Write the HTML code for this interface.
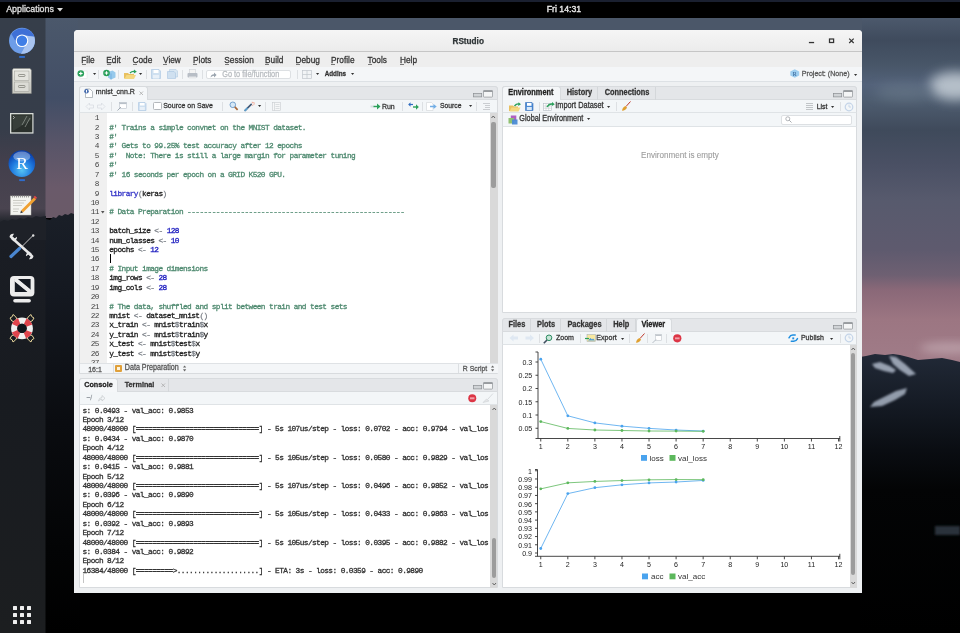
<!DOCTYPE html><html><head><meta charset="utf-8"><style>
*{margin:0;padding:0;box-sizing:border-box}
html,body{width:960px;height:633px;overflow:hidden;background:#000;font-family:"Liberation Sans",sans-serif}
.t{position:absolute;white-space:pre}
.m{-webkit-text-stroke:0.3px currentColor}
.s{-webkit-text-stroke:0.25px currentColor}
svg{position:absolute;overflow:visible}
#root{position:absolute;left:0;top:0;width:960px;height:633px;overflow:hidden;filter:blur(0.3px)}</style></head><body><div id="root">
<svg style="left:0;top:0" width="960" height="633" viewBox="0 0 960 633">
<defs>
<filter id="bl4" x="-50%" y="-50%" width="200%" height="200%"><feGaussianBlur stdDeviation="4"/></filter>
<filter id="bl1" x="-50%" y="-50%" width="200%" height="200%"><feGaussianBlur stdDeviation="1"/></filter>
<linearGradient id="skyL" x1="0" y1="0" x2="0" y2="1">
<stop offset="0" stop-color="#4b586b"/><stop offset="0.4" stop-color="#424e66"/>
<stop offset="0.6" stop-color="#565468"/><stop offset="0.85" stop-color="#6a5a6a"/><stop offset="1" stop-color="#6a5a68"/></linearGradient>
<linearGradient id="skyR" x1="0" y1="18" x2="0" y2="363" gradientUnits="userSpaceOnUse">
<stop offset="0" stop-color="#4c596c"/><stop offset="0.064" stop-color="#3f4b5d"/><stop offset="0.136" stop-color="#485668"/><stop offset="0.194" stop-color="#53627a"/>
<stop offset="0.238" stop-color="#4e5d70"/><stop offset="0.325" stop-color="#3f4a5b"/><stop offset="0.426" stop-color="#4a5064"/><stop offset="0.528" stop-color="#575a6d"/>
<stop offset="0.672" stop-color="#5e5a6e"/><stop offset="0.745" stop-color="#6e6072"/><stop offset="0.788" stop-color="#8a6878"/><stop offset="0.875" stop-color="#9c7682"/><stop offset="1" stop-color="#a07c88"/></linearGradient>
<linearGradient id="mtnR" x1="0" y1="352" x2="0" y2="633" gradientUnits="userSpaceOnUse">
<stop offset="0" stop-color="#222a38"/><stop offset="0.17" stop-color="#161c26"/><stop offset="0.35" stop-color="#0a0d12"/><stop offset="0.49" stop-color="#030405"/><stop offset="1" stop-color="#000"/></linearGradient>
<linearGradient id="mtnL" x1="0" y1="212" x2="0" y2="633" gradientUnits="userSpaceOnUse">
<stop offset="0" stop-color="#1a1f28"/><stop offset="0.2" stop-color="#141820"/><stop offset="0.5" stop-color="#0a0c10"/><stop offset="0.8" stop-color="#030405"/><stop offset="1" stop-color="#000"/></linearGradient>
</defs>
<rect x="0" y="0" width="960" height="633" fill="#000"/>
<rect x="40" y="18" width="40" height="200" fill="url(#skyL)"/>
<rect x="860" y="18" width="100" height="345" fill="url(#skyR)"/>
<rect x="78" y="18" width="784" height="13" fill="#4b5769"/>
<filter id="bl6" x="-50%" y="-50%" width="200%" height="200%"><feGaussianBlur stdDeviation="6"/></filter>
<ellipse cx="955" cy="86" rx="26" ry="14" fill="#c0c9d2" filter="url(#bl6)" opacity="0.9"/>
<ellipse cx="905" cy="92" rx="30" ry="8" fill="#6a7a8a" filter="url(#bl6)" opacity="0.6"/>
<ellipse cx="950" cy="348" rx="30" ry="6" fill="#c8b0b8" filter="url(#bl4)" opacity="0.6"/>
<polygon points="40,222 46,219 50,220 53,217 56,218 59,215 62,216 65,214 68,215 71,213 74,214 80,213 80,633 40,633" fill="url(#mtnL)"/>
<polygon points="860,357 866,356 875,354 885,355 893,354 900,355 908,357 918,360 930,359 942,358 952,360 960,362 960,633 860,633" fill="url(#mtnR)"/>
<g filter="url(#bl1)" opacity="0.9">
<polygon points="872,364 880,362 890,366 896,370 893,373 884,371 875,368" fill="#a4aebe"/>
<polygon points="889,356 896,357 905,364 916,374 909,376 900,370 893,364" fill="#a4aebe"/>
<polygon points="870,407 874,402 884,397 896,391 907,388 905,394 895,400 882,406" fill="#a0aaba"/>
</g>
<rect x="935" y="526" width="25" height="9" fill="#2a303a" filter="url(#bl1)"/>
</svg>
<div class="t s" style="left:0px;top:0px;width:960px;height:18px;background:#000;border-top:2px solid #1a2030"></div>
<div class="t s" style="left:6.2px;top:3.84px;font-size:8.85px;line-height:11.51px;color:#dcdcdc;font-weight:normal;font-family:'Liberation Sans',sans-serif;-webkit-text-stroke:0.35px #dcdcdc">Applications</div>
<svg style="left:57px;top:8px" width="7" height="4"><polygon points="0,0 6,0 3,3.5" fill="#ddd"/></svg>
<div class="t s" style="left:546.8px;top:3.94px;font-size:8.7px;line-height:11.31px;color:#ececec;font-weight:normal;font-family:'Liberation Sans',sans-serif;-webkit-text-stroke:0.35px #ececec">Fri 14:31</div>
<svg style="left:0;top:18px" width="46" height="615" viewBox="0 18 46 615">
<defs><linearGradient id="dockg" x1="0" y1="0" x2="0" y2="1">
<stop offset="0" stop-color="#363e4a"/><stop offset="0.18" stop-color="#363d4a"/><stop offset="0.23" stop-color="#423f4c"/>
<stop offset="0.31" stop-color="#4a4450"/><stop offset="0.33" stop-color="#24272e"/><stop offset="0.36" stop-color="#1a1d24"/><stop offset="0.62" stop-color="#181b20"/><stop offset="1" stop-color="#1c1e20"/></linearGradient>
<radialGradient id="rball" cx="0.4" cy="0.3" r="0.8"><stop offset="0" stop-color="#8fc4f4"/><stop offset="0.5" stop-color="#2f7fd8"/><stop offset="1" stop-color="#1552a8"/></radialGradient>
</defs>
<rect x="0" y="18" width="45.5" height="615" fill="url(#dockg)"/>
<polygon points="0,222 4,220 8,221 12,219 16,220 20,218 24,219 28,217 32,218 36,216 40,217 46,216 46,240 0,240" fill="#1e2128"/>
<!-- chromium -->
<circle cx="22" cy="40.8" r="13" fill="#6d9de8"/>
<path d="M16,42 L11.5,34 A13,13 0 0 1 34.3,36.8 L25,35.5 Z" fill="#3f70d6"/>
<path d="M25,35.5 L34.3,36.8 A13,13 0 0 1 21,53.8 L25.5,45.5 Z" fill="#a9c4f0"/>
<circle cx="22" cy="40.8" r="6.3" fill="#fff"/>
<circle cx="22" cy="40.8" r="5.2" fill="#3f7ee6"/>
<rect x="19.2" y="56" width="5.7" height="1.9" fill="#2f6ccc"/>
<!-- file cabinet -->
<defs><linearGradient id="cab" x1="0" y1="0" x2="0" y2="1"><stop offset="0" stop-color="#f0f0ea"/><stop offset="1" stop-color="#c8c8c0"/></linearGradient></defs>
<path d="M13.5,68.5 H30 L31.3,70 V93.5 H12.3 V70 Z" fill="url(#cab)" stroke="#8a8a84" stroke-width="0.6"/>
<rect x="14.5" y="71" width="14.5" height="9.5" fill="#e4e4de" stroke="#9a9a94" stroke-width="0.5"/>
<rect x="14.5" y="82" width="14.5" height="9.5" fill="#dcdcd6" stroke="#9a9a94" stroke-width="0.5"/>
<rect x="18.5" y="74.5" width="6.5" height="2" rx="0.8" fill="none" stroke="#77776f" stroke-width="0.7"/>
<rect x="18.5" y="85.5" width="6.5" height="2" rx="0.8" fill="none" stroke="#77776f" stroke-width="0.7"/>
<!-- terminal -->
<rect x="10" y="113" width="23.5" height="20.6" fill="#d8dcd8"/>
<rect x="11.3" y="114.3" width="21" height="18" fill="#2a302c"/>
<path d="M12.5,115.5 H31 V120 L13,131 Z" fill="#3e4640" opacity="0.7"/>
<path d="M13,116 L14.5,117.5 L13,119" stroke="#eee" stroke-width="0.6" fill="none"/>
<path d="M22,125 L27,116 M25,127 L30,118" stroke="#8a928c" stroke-width="0.8"/>
<!-- R -->
<defs><radialGradient id="rg" cx="0.5" cy="0.75" r="0.7"><stop offset="0" stop-color="#56c4f4"/><stop offset="0.55" stop-color="#1f7ae0"/><stop offset="1" stop-color="#0a3ea8"/></radialGradient></defs>
<circle cx="21.8" cy="163.6" r="13.3" fill="url(#rg)"/>
<ellipse cx="21.8" cy="156.5" rx="8.5" ry="5" fill="#fff" opacity="0.35"/>
<text x="22" y="169.2" text-anchor="middle" font-family="Liberation Serif" font-size="17.5" fill="#fff">R</text>
<rect x="19.2" y="179.2" width="5.7" height="1.9" fill="#2f6ccc"/>
<!-- text editor -->
<rect x="10.5" y="196" width="20.5" height="19" fill="#f4f4f0" stroke="#b8b8b0" stroke-width="0.5"/>
<path d="M12.5,195.5 V197.5 M14.5,195.5 V197.5 M16.5,195.5 V197.5 M18.5,195.5 V197.5 M20.5,195.5 V197.5 M22.5,195.5 V197.5 M24.5,195.5 V197.5 M26.5,195.5 V197.5 M28.5,195.5 V197.5" stroke="#888" stroke-width="0.8"/>
<path d="M13,200.5 H26 M13,203 H24 M13,205.5 H22 M13,209 H19 M13,211.5 H18" stroke="#b0b0a8" stroke-width="0.6"/>
<path d="M21,210.5 L34,197.5 L36,199.5 L23,212.5 Z" fill="#f0a030"/>
<path d="M33.5,197 L35,195.8 L37,197.8 L35.8,199.3 Z" fill="#e04848"/>
<path d="M21,210.5 L23,212.5 L20.3,213.2 Z" fill="#333"/>
<!-- tools -->
<path d="M12,238 L31,255" stroke="#e8e8e8" stroke-width="2.6"/>
<path d="M9.5,237 A4,4 0 0 1 14,233.8 L12.5,236.5 L14.5,238.5 L17,236.8 A4,4 0 0 1 13.5,241.3 Z" fill="#e8e8e8"/>
<path d="M33.5,256 A4,4 0 0 1 29,259.2 L30.5,256.5 L28.5,254.5 L26,256.2 A4,4 0 0 1 29.5,251.7 Z" fill="#e8e8e8"/>
<path d="M20.5,248 L33,235.5" stroke="#d8d8d8" stroke-width="0.9"/>
<circle cx="33.2" cy="235.5" r="1.2" fill="#e0e0e0"/>
<path d="M11,256.5 L19.5,248.5" stroke="#4a86d0" stroke-width="3.2" stroke-linecap="round"/>
<!-- display -->
<rect x="10" y="276" width="24.4" height="20.5" rx="4" fill="#ececec"/>
<rect x="14.8" y="279" width="15.8" height="13" fill="#151a22"/>
<path d="M14.8,279 L17.8,279 L30.6,289.5 L30.6,292 L27.6,292 L14.8,281.5 Z" fill="#ececec"/>
<path d="M14.8,279 L30.6,292" stroke="#ececec" stroke-width="3.2"/>
<rect x="13.2" y="299" width="17.7" height="3.5" rx="1.75" fill="#ececec"/>
<!-- lifebuoy -->
<path d="M15.5,322 Q11,322 10,318 Q13,317 13,314.5 Q16,316 17.5,320 M28.5,322 Q33,322 34,318 Q31,317 31,314.5 Q28,316 26.5,320 M15.5,334.5 Q11,334.5 10,338.5 Q13,339.5 13,342 Q16,340.5 17.5,336.5 M28.5,334.5 Q33,334.5 34,338.5 Q31,339.5 31,342 Q28,340.5 26.5,336.5" stroke="#e6d49a" stroke-width="1" fill="none"/>
<circle cx="22" cy="328.4" r="7.8" fill="none" stroke="#f0f0f0" stroke-width="6.2"/>
<circle cx="22" cy="328.4" r="7.8" fill="none" stroke="#e0444c" stroke-width="6.2" stroke-dasharray="6.125 6.125" stroke-dashoffset="-3.06"/>
<circle cx="22" cy="328.4" r="4.7" fill="#12161c"/>
<!-- app grid -->
<g fill="#eee"><rect x="13" y="606" width="4" height="4" rx="0.5"/><rect x="20" y="606" width="4" height="4" rx="0.5"/><rect x="27" y="606" width="4" height="4" rx="0.5"/>
<rect x="13" y="613" width="4" height="4" rx="0.5"/><rect x="20" y="613" width="4" height="4" rx="0.5"/><rect x="27" y="613" width="4" height="4" rx="0.5"/>
<rect x="13" y="620" width="4" height="4" rx="0.5"/><rect x="20" y="620" width="4" height="4" rx="0.5"/><rect x="27" y="620" width="4" height="4" rx="0.5"/></g>
</svg>
<div class="t s" style="left:74px;top:30px;width:788px;height:563px;background:#eef0f2;border-radius:4px 4px 0 0"></div>
<div class="t s" style="left:74px;top:30px;width:788px;height:22px;background:linear-gradient(#f5f5f5,#ececec);border-bottom:1px solid #c6c6c6;border-radius:4px 4px 0 0"></div>
<div class="t s" style="left:452.5px;top:36.57px;font-size:8.2px;line-height:10.66px;color:#2e3436;font-weight:bold;font-family:'Liberation Sans',sans-serif;">RStudio</div>
<svg style="left:800px;top:34px" width="60" height="14">
<rect x="8.9" y="7.9" width="5.2" height="1.3" fill="#333"/>
<rect x="29.5" y="5" width="4.1" height="3.5" fill="none" stroke="#333" stroke-width="1.25"/>
<path d="M49.2,4.6 L53.7,9 M53.7,4.6 L49.2,9" stroke="#333" stroke-width="1.2"/>
</svg>
<div class="t s" style="left:74px;top:52px;width:788px;height:15px;background:#eeeeee"></div>
<div class="t s" style="left:81.3px;top:54.81px;font-size:8.3px;line-height:10.79px;color:#333;font-weight:normal;font-family:'Liberation Sans',sans-serif;transform:scaleY(1.170);">File</div>
<div class="t s" style="left:81.5px;top:64.0px;width:4.2px;height:0.55px;background:#777"></div>
<div class="t s" style="left:106.3px;top:54.81px;font-size:8.3px;line-height:10.79px;color:#333;font-weight:normal;font-family:'Liberation Sans',sans-serif;transform:scaleY(1.170);">Edit</div>
<div class="t s" style="left:106.5px;top:64.0px;width:4.2px;height:0.55px;background:#777"></div>
<div class="t s" style="left:132.5px;top:54.81px;font-size:8.3px;line-height:10.79px;color:#333;font-weight:normal;font-family:'Liberation Sans',sans-serif;transform:scaleY(1.170);">Code</div>
<div class="t s" style="left:132.7px;top:64.0px;width:4.2px;height:0.55px;background:#777"></div>
<div class="t s" style="left:163px;top:54.81px;font-size:8.3px;line-height:10.79px;color:#333;font-weight:normal;font-family:'Liberation Sans',sans-serif;transform:scaleY(1.170);">View</div>
<div class="t s" style="left:163.2px;top:64.0px;width:4.2px;height:0.55px;background:#777"></div>
<div class="t s" style="left:193px;top:54.81px;font-size:8.3px;line-height:10.79px;color:#333;font-weight:normal;font-family:'Liberation Sans',sans-serif;transform:scaleY(1.170);">Plots</div>
<div class="t s" style="left:193.2px;top:64.0px;width:4.2px;height:0.55px;background:#777"></div>
<div class="t s" style="left:224.3px;top:54.81px;font-size:8.3px;line-height:10.79px;color:#333;font-weight:normal;font-family:'Liberation Sans',sans-serif;transform:scaleY(1.170);">Session</div>
<div class="t s" style="left:224.5px;top:64.0px;width:4.2px;height:0.55px;background:#777"></div>
<div class="t s" style="left:265px;top:54.81px;font-size:8.3px;line-height:10.79px;color:#333;font-weight:normal;font-family:'Liberation Sans',sans-serif;transform:scaleY(1.170);">Build</div>
<div class="t s" style="left:265.2px;top:64.0px;width:4.2px;height:0.55px;background:#777"></div>
<div class="t s" style="left:295.5px;top:54.81px;font-size:8.3px;line-height:10.79px;color:#333;font-weight:normal;font-family:'Liberation Sans',sans-serif;transform:scaleY(1.170);">Debug</div>
<div class="t s" style="left:295.7px;top:64.0px;width:4.2px;height:0.55px;background:#777"></div>
<div class="t s" style="left:331px;top:54.81px;font-size:8.3px;line-height:10.79px;color:#333;font-weight:normal;font-family:'Liberation Sans',sans-serif;transform:scaleY(1.170);">Profile</div>
<div class="t s" style="left:331.2px;top:64.0px;width:4.2px;height:0.55px;background:#777"></div>
<div class="t s" style="left:367.5px;top:54.81px;font-size:8.3px;line-height:10.79px;color:#333;font-weight:normal;font-family:'Liberation Sans',sans-serif;transform:scaleY(1.170);">Tools</div>
<div class="t s" style="left:367.7px;top:64.0px;width:4.2px;height:0.55px;background:#777"></div>
<div class="t s" style="left:400px;top:54.81px;font-size:8.3px;line-height:10.79px;color:#333;font-weight:normal;font-family:'Liberation Sans',sans-serif;transform:scaleY(1.170);">Help</div>
<div class="t s" style="left:400.2px;top:64.0px;width:4.2px;height:0.55px;background:#777"></div>
<div class="t s" style="left:74px;top:67px;width:788px;height:14.5px;background:#f4f6f8;border-bottom:1px solid #dde1e5"></div>
<div class="t s" style="left:78.6px;top:85.5px;width:419.3px;height:288px;background:#fff;border:1px solid #d8dbde;border-radius:3px 3px 0 0"></div>
<div class="t s" style="left:78.6px;top:85.5px;width:419.3px;height:14px;background:#e4e6e9;border:1px solid #d8dbde;border-radius:3px 3px 0 0"></div>
<div class="t s" style="left:78.6px;top:99.5px;width:419.3px;height:13px;background:#f3f6f8;border-left:1px solid #d8dbde;border-right:1px solid #d8dbde;border-bottom:1px solid #dfe3e6"></div>
<div class="t s" style="left:78.6px;top:377.5px;width:419.3px;height:210.5px;background:#fff;border:1px solid #d8dbde;border-radius:3px 3px 0 0"></div>
<div class="t s" style="left:78.6px;top:377.5px;width:419.3px;height:14px;background:#e4e6e9;border:1px solid #d8dbde;border-radius:3px 3px 0 0"></div>
<div class="t s" style="left:78.6px;top:391.5px;width:419.3px;height:13px;background:#f3f6f8;border-left:1px solid #d8dbde;border-right:1px solid #d8dbde;border-bottom:1px solid #dfe3e6"></div>
<div class="t s" style="left:502.2px;top:85.5px;width:354.8px;height:227.5px;background:#fff;border:1px solid #d8dbde;border-radius:3px 3px 0 0"></div>
<div class="t s" style="left:502.2px;top:85.5px;width:354.8px;height:14px;background:#e4e6e9;border:1px solid #d8dbde;border-radius:3px 3px 0 0"></div>
<div class="t s" style="left:502.2px;top:99.5px;width:354.8px;height:13px;background:#f3f6f8;border-left:1px solid #d8dbde;border-right:1px solid #d8dbde;border-bottom:1px solid #dfe3e6"></div>
<div class="t s" style="left:502.2px;top:112.5px;width:354.8px;height:14px;background:#f3f6f8;border-left:1px solid #d8dbde;border-right:1px solid #d8dbde;border-bottom:1px solid #dfe3e6"></div>
<div class="t s" style="left:502.2px;top:317.5px;width:354.8px;height:270.5px;background:#fff;border:1px solid #d8dbde;border-radius:3px 3px 0 0"></div>
<div class="t s" style="left:502.2px;top:317.5px;width:354.8px;height:14px;background:#e4e6e9;border:1px solid #d8dbde;border-radius:3px 3px 0 0"></div>
<div class="t s" style="left:502.2px;top:331.5px;width:354.8px;height:13px;background:#f3f6f8;border-left:1px solid #d8dbde;border-right:1px solid #d8dbde;border-bottom:1px solid #dfe3e6"></div>
<div class="t s" style="left:79.5px;top:112.5px;width:27px;height:251px;background:#f0f0f0"></div>
<div class="t" style="left:79.5px;top:112.5px;width:410px;height:250.5px;overflow:hidden">
<div class="t" style="left:0;top:1.69px;width:19.4px;text-align:right;font:7.8px/9.417px 'Liberation Mono',monospace;letter-spacing:-0.581px;color:#444">1</div>
<div class="t" style="left:0;top:11.11px;width:19.4px;text-align:right;font:7.8px/9.417px 'Liberation Mono',monospace;letter-spacing:-0.581px;color:#444">2</div>
<div class="t m" style="left:29.75px;top:11.11px;font:7.8px/9.417px 'Liberation Mono',monospace;letter-spacing:-0.581px;color:#222"><span style="color:#4f8a70">#&#x27; Trains a simple convnet on the MNIST dataset.</span></div>
<div class="t" style="left:0;top:20.53px;width:19.4px;text-align:right;font:7.8px/9.417px 'Liberation Mono',monospace;letter-spacing:-0.581px;color:#444">3</div>
<div class="t m" style="left:29.75px;top:20.53px;font:7.8px/9.417px 'Liberation Mono',monospace;letter-spacing:-0.581px;color:#222"><span style="color:#4f8a70">#&#x27;</span></div>
<div class="t" style="left:0;top:29.94px;width:19.4px;text-align:right;font:7.8px/9.417px 'Liberation Mono',monospace;letter-spacing:-0.581px;color:#444">4</div>
<div class="t m" style="left:29.75px;top:29.94px;font:7.8px/9.417px 'Liberation Mono',monospace;letter-spacing:-0.581px;color:#222"><span style="color:#4f8a70">#&#x27; Gets to 99.25% test accuracy after 12 epochs</span></div>
<div class="t" style="left:0;top:39.36px;width:19.4px;text-align:right;font:7.8px/9.417px 'Liberation Mono',monospace;letter-spacing:-0.581px;color:#444">5</div>
<div class="t m" style="left:29.75px;top:39.36px;font:7.8px/9.417px 'Liberation Mono',monospace;letter-spacing:-0.581px;color:#222"><span style="color:#4f8a70">#&#x27;  Note: There is still a large margin for parameter tuning</span></div>
<div class="t" style="left:0;top:48.78px;width:19.4px;text-align:right;font:7.8px/9.417px 'Liberation Mono',monospace;letter-spacing:-0.581px;color:#444">6</div>
<div class="t m" style="left:29.75px;top:48.78px;font:7.8px/9.417px 'Liberation Mono',monospace;letter-spacing:-0.581px;color:#222"><span style="color:#4f8a70">#&#x27;</span></div>
<div class="t" style="left:0;top:58.19px;width:19.4px;text-align:right;font:7.8px/9.417px 'Liberation Mono',monospace;letter-spacing:-0.581px;color:#444">7</div>
<div class="t m" style="left:29.75px;top:58.19px;font:7.8px/9.417px 'Liberation Mono',monospace;letter-spacing:-0.581px;color:#222"><span style="color:#4f8a70">#&#x27; 16 seconds per epoch on a GRID K520 GPU.</span></div>
<div class="t" style="left:0;top:67.61px;width:19.4px;text-align:right;font:7.8px/9.417px 'Liberation Mono',monospace;letter-spacing:-0.581px;color:#444">8</div>
<div class="t" style="left:0;top:77.03px;width:19.4px;text-align:right;font:7.8px/9.417px 'Liberation Mono',monospace;letter-spacing:-0.581px;color:#444">9</div>
<div class="t m" style="left:29.75px;top:77.03px;font:7.8px/9.417px 'Liberation Mono',monospace;letter-spacing:-0.581px;color:#222"><span style="color:#3434c8">library</span><span style="color:#7a7f86">(</span><span style="color:#222">keras</span><span style="color:#7a7f86">)</span></div>
<div class="t" style="left:0;top:86.44px;width:19.4px;text-align:right;font:7.8px/9.417px 'Liberation Mono',monospace;letter-spacing:-0.581px;color:#444">10</div>
<div class="t" style="left:0;top:95.86px;width:19.4px;text-align:right;font:7.8px/9.417px 'Liberation Mono',monospace;letter-spacing:-0.581px;color:#444">11</div>
<div class="t m" style="left:29.75px;top:95.86px;font:7.8px/9.417px 'Liberation Mono',monospace;letter-spacing:-0.581px;color:#222"><span style="color:#4f8a70"># Data Preparation -----------------------------------------------------</span></div>
<div class="t" style="left:0;top:105.28px;width:19.4px;text-align:right;font:7.8px/9.417px 'Liberation Mono',monospace;letter-spacing:-0.581px;color:#444">12</div>
<div class="t" style="left:0;top:114.70px;width:19.4px;text-align:right;font:7.8px/9.417px 'Liberation Mono',monospace;letter-spacing:-0.581px;color:#444">13</div>
<div class="t m" style="left:29.75px;top:114.70px;font:7.8px/9.417px 'Liberation Mono',monospace;letter-spacing:-0.581px;color:#222"><span style="color:#222">batch_size</span><span style="color:#7a7f86"> &lt;- </span><span style="color:#2020c0">128</span></div>
<div class="t" style="left:0;top:124.11px;width:19.4px;text-align:right;font:7.8px/9.417px 'Liberation Mono',monospace;letter-spacing:-0.581px;color:#444">14</div>
<div class="t m" style="left:29.75px;top:124.11px;font:7.8px/9.417px 'Liberation Mono',monospace;letter-spacing:-0.581px;color:#222"><span style="color:#222">num_classes</span><span style="color:#7a7f86"> &lt;- </span><span style="color:#2020c0">10</span></div>
<div class="t" style="left:0;top:133.53px;width:19.4px;text-align:right;font:7.8px/9.417px 'Liberation Mono',monospace;letter-spacing:-0.581px;color:#444">15</div>
<div class="t m" style="left:29.75px;top:133.53px;font:7.8px/9.417px 'Liberation Mono',monospace;letter-spacing:-0.581px;color:#222"><span style="color:#222">epochs</span><span style="color:#7a7f86"> &lt;- </span><span style="color:#2020c0">12</span></div>
<div class="t" style="left:0;top:142.95px;width:19.4px;text-align:right;font:7.8px/9.417px 'Liberation Mono',monospace;letter-spacing:-0.581px;color:#444">16</div>
<div class="t" style="left:0;top:152.36px;width:19.4px;text-align:right;font:7.8px/9.417px 'Liberation Mono',monospace;letter-spacing:-0.581px;color:#444">17</div>
<div class="t m" style="left:29.75px;top:152.36px;font:7.8px/9.417px 'Liberation Mono',monospace;letter-spacing:-0.581px;color:#222"><span style="color:#4f8a70"># Input image dimensions</span></div>
<div class="t" style="left:0;top:161.78px;width:19.4px;text-align:right;font:7.8px/9.417px 'Liberation Mono',monospace;letter-spacing:-0.581px;color:#444">18</div>
<div class="t m" style="left:29.75px;top:161.78px;font:7.8px/9.417px 'Liberation Mono',monospace;letter-spacing:-0.581px;color:#222"><span style="color:#222">img_rows</span><span style="color:#7a7f86"> &lt;- </span><span style="color:#2020c0">28</span></div>
<div class="t" style="left:0;top:171.20px;width:19.4px;text-align:right;font:7.8px/9.417px 'Liberation Mono',monospace;letter-spacing:-0.581px;color:#444">19</div>
<div class="t m" style="left:29.75px;top:171.20px;font:7.8px/9.417px 'Liberation Mono',monospace;letter-spacing:-0.581px;color:#222"><span style="color:#222">img_cols</span><span style="color:#7a7f86"> &lt;- </span><span style="color:#2020c0">28</span></div>
<div class="t" style="left:0;top:180.61px;width:19.4px;text-align:right;font:7.8px/9.417px 'Liberation Mono',monospace;letter-spacing:-0.581px;color:#444">20</div>
<div class="t" style="left:0;top:190.03px;width:19.4px;text-align:right;font:7.8px/9.417px 'Liberation Mono',monospace;letter-spacing:-0.581px;color:#444">21</div>
<div class="t m" style="left:29.75px;top:190.03px;font:7.8px/9.417px 'Liberation Mono',monospace;letter-spacing:-0.581px;color:#222"><span style="color:#4f8a70"># The data, shuffled and split between train and test sets</span></div>
<div class="t" style="left:0;top:199.45px;width:19.4px;text-align:right;font:7.8px/9.417px 'Liberation Mono',monospace;letter-spacing:-0.581px;color:#444">22</div>
<div class="t m" style="left:29.75px;top:199.45px;font:7.8px/9.417px 'Liberation Mono',monospace;letter-spacing:-0.581px;color:#222"><span style="color:#222">mnist</span><span style="color:#7a7f86"> &lt;- </span><span style="color:#222">dataset_mnist</span><span style="color:#7a7f86">()</span></div>
<div class="t" style="left:0;top:208.87px;width:19.4px;text-align:right;font:7.8px/9.417px 'Liberation Mono',monospace;letter-spacing:-0.581px;color:#444">23</div>
<div class="t m" style="left:29.75px;top:208.87px;font:7.8px/9.417px 'Liberation Mono',monospace;letter-spacing:-0.581px;color:#222"><span style="color:#222">x_train</span><span style="color:#7a7f86"> &lt;- </span><span style="color:#222">mnist</span><span style="color:#7a7f86">$</span><span style="color:#222">train</span><span style="color:#7a7f86">$</span><span style="color:#222">x</span></div>
<div class="t" style="left:0;top:218.28px;width:19.4px;text-align:right;font:7.8px/9.417px 'Liberation Mono',monospace;letter-spacing:-0.581px;color:#444">24</div>
<div class="t m" style="left:29.75px;top:218.28px;font:7.8px/9.417px 'Liberation Mono',monospace;letter-spacing:-0.581px;color:#222"><span style="color:#222">y_train</span><span style="color:#7a7f86"> &lt;- </span><span style="color:#222">mnist</span><span style="color:#7a7f86">$</span><span style="color:#222">train</span><span style="color:#7a7f86">$</span><span style="color:#222">y</span></div>
<div class="t" style="left:0;top:227.70px;width:19.4px;text-align:right;font:7.8px/9.417px 'Liberation Mono',monospace;letter-spacing:-0.581px;color:#444">25</div>
<div class="t m" style="left:29.75px;top:227.70px;font:7.8px/9.417px 'Liberation Mono',monospace;letter-spacing:-0.581px;color:#222"><span style="color:#222">x_test</span><span style="color:#7a7f86"> &lt;- </span><span style="color:#222">mnist</span><span style="color:#7a7f86">$</span><span style="color:#222">test</span><span style="color:#7a7f86">$</span><span style="color:#222">x</span></div>
<div class="t" style="left:0;top:237.12px;width:19.4px;text-align:right;font:7.8px/9.417px 'Liberation Mono',monospace;letter-spacing:-0.581px;color:#444">26</div>
<div class="t m" style="left:29.75px;top:237.12px;font:7.8px/9.417px 'Liberation Mono',monospace;letter-spacing:-0.581px;color:#222"><span style="color:#222">y_test</span><span style="color:#7a7f86"> &lt;- </span><span style="color:#222">mnist</span><span style="color:#7a7f86">$</span><span style="color:#222">test</span><span style="color:#7a7f86">$</span><span style="color:#222">y</span></div>
<div class="t" style="left:0;top:246.53px;width:19.4px;text-align:right;font:7.8px/9.417px 'Liberation Mono',monospace;letter-spacing:-0.581px;color:#444">27</div>
</div>
<svg style="left:101px;top:211px" width="4" height="3"><polygon points="0,0 3.5,0 1.75,2.5" fill="#555"/></svg>
<div class="t s" style="left:109.5px;top:254px;width:0.9px;height:8.5px;background:#000"></div>
<div class="t s" style="left:489.5px;top:112.5px;width:8px;height:251px;background:#d9d9d9"></div>
<div class="t s" style="left:491px;top:122px;width:4.5px;height:66px;background:#9c9c9c;border-radius:2px"></div>
<svg style="left:491px;top:115px" width="5" height="4"><polyline points="0.5,3 2.25,1 4,3" fill="none" stroke="#555" stroke-width="0.9"/></svg>
<div class="t s" style="left:79.5px;top:363px;width:418px;height:10px;background:#f4f6f8;border-top:1px solid #dfe2e5"></div>
<div class="t s" style="left:88.2px;top:364.55px;font-size:7px;line-height:9.1px;color:#555;font-weight:normal;font-family:'Liberation Sans',sans-serif;transform:scaleY(1.150);">16:1</div>
<div class="t s" style="left:112.5px;top:364px;width:1px;height:8.5px;background:#dcdfe2"></div>
<div class="t s" style="left:115px;top:365px;width:6.5px;height:6.5px;background:#e0a03a;border-radius:1px"></div>
<div class="t s" style="left:117px;top:367px;width:2.5px;height:2.5px;background:#fff3d8"></div>
<div class="t s" style="left:124.8px;top:364.46px;font-size:7.15px;line-height:9.29px;color:#555;font-weight:normal;font-family:'Liberation Sans',sans-serif;transform:scaleY(1.150);">Data Preparation</div>
<svg style="left:182.5px;top:365px" width="4" height="7"><polygon points="0,2.6 3.2,2.6 1.6,0.4" fill="#666"/><polygon points="0,4.2 3.2,4.2 1.6,6.4" fill="#666"/></svg>
<div class="t s" style="left:457.5px;top:364px;width:1px;height:8.5px;background:#dcdfe2"></div>
<div class="t s" style="left:462.8px;top:364.64px;font-size:6.86px;line-height:8.92px;color:#555;font-weight:normal;font-family:'Liberation Sans',sans-serif;transform:scaleY(1.150);">R Script</div>
<svg style="left:490.5px;top:365px" width="4" height="7"><polygon points="0,2.6 3.2,2.6 1.6,0.4" fill="#666"/><polygon points="0,4.2 3.2,4.2 1.6,6.4" fill="#666"/></svg>
<div class="t m" style="left:82.5px;top:406.59px;font:7.8px/9.43px 'Liberation Mono',monospace;letter-spacing:-0.581px;color:#333">s: 0.0493 - val_acc: 0.9853</div>
<div class="t m" style="left:82.5px;top:416.02px;font:7.8px/9.43px 'Liberation Mono',monospace;letter-spacing:-0.581px;color:#333">Epoch 3/12</div>
<div class="t m" style="left:82.5px;top:425.45px;font:7.8px/9.43px 'Liberation Mono',monospace;letter-spacing:-0.581px;color:#333">48000/48000 [==============================] - 5s 107us/step - loss: 0.0702 - acc: 0.9794 - val_los</div>
<div class="t m" style="left:82.5px;top:434.88px;font:7.8px/9.43px 'Liberation Mono',monospace;letter-spacing:-0.581px;color:#333">s: 0.0434 - val_acc: 0.9870</div>
<div class="t m" style="left:82.5px;top:444.31px;font:7.8px/9.43px 'Liberation Mono',monospace;letter-spacing:-0.581px;color:#333">Epoch 4/12</div>
<div class="t m" style="left:82.5px;top:453.74px;font:7.8px/9.43px 'Liberation Mono',monospace;letter-spacing:-0.581px;color:#333">48000/48000 [==============================] - 5s 105us/step - loss: 0.0580 - acc: 0.9829 - val_los</div>
<div class="t m" style="left:82.5px;top:463.17px;font:7.8px/9.43px 'Liberation Mono',monospace;letter-spacing:-0.581px;color:#333">s: 0.0415 - val_acc: 0.9881</div>
<div class="t m" style="left:82.5px;top:472.60px;font:7.8px/9.43px 'Liberation Mono',monospace;letter-spacing:-0.581px;color:#333">Epoch 5/12</div>
<div class="t m" style="left:82.5px;top:482.03px;font:7.8px/9.43px 'Liberation Mono',monospace;letter-spacing:-0.581px;color:#333">48000/48000 [==============================] - 5s 107us/step - loss: 0.0496 - acc: 0.9852 - val_los</div>
<div class="t m" style="left:82.5px;top:491.46px;font:7.8px/9.43px 'Liberation Mono',monospace;letter-spacing:-0.581px;color:#333">s: 0.0396 - val_acc: 0.9890</div>
<div class="t m" style="left:82.5px;top:500.89px;font:7.8px/9.43px 'Liberation Mono',monospace;letter-spacing:-0.581px;color:#333">Epoch 6/12</div>
<div class="t m" style="left:82.5px;top:510.31px;font:7.8px/9.43px 'Liberation Mono',monospace;letter-spacing:-0.581px;color:#333">48000/48000 [==============================] - 5s 105us/step - loss: 0.0433 - acc: 0.9863 - val_los</div>
<div class="t m" style="left:82.5px;top:519.75px;font:7.8px/9.43px 'Liberation Mono',monospace;letter-spacing:-0.581px;color:#333">s: 0.0392 - val_acc: 0.9893</div>
<div class="t m" style="left:82.5px;top:529.17px;font:7.8px/9.43px 'Liberation Mono',monospace;letter-spacing:-0.581px;color:#333">Epoch 7/12</div>
<div class="t m" style="left:82.5px;top:538.60px;font:7.8px/9.43px 'Liberation Mono',monospace;letter-spacing:-0.581px;color:#333">48000/48000 [==============================] - 5s 105us/step - loss: 0.0395 - acc: 0.9882 - val_los</div>
<div class="t m" style="left:82.5px;top:548.03px;font:7.8px/9.43px 'Liberation Mono',monospace;letter-spacing:-0.581px;color:#333">s: 0.0384 - val_acc: 0.9892</div>
<div class="t m" style="left:82.5px;top:557.47px;font:7.8px/9.43px 'Liberation Mono',monospace;letter-spacing:-0.581px;color:#333">Epoch 8/12</div>
<div class="t m" style="left:82.5px;top:566.89px;font:7.8px/9.43px 'Liberation Mono',monospace;letter-spacing:-0.581px;color:#333">16384/48000 [=========&gt;....................] - ETA: 3s - loss: 0.0359 - acc: 0.9890</div>
<div class="t s" style="left:83.2px;top:574.3px;width:1px;height:9px;background:#c4c4c4"></div>
<div class="t s" style="left:490.2px;top:404.5px;width:7.3px;height:183px;background:#d9d9d9"></div>
<div class="t s" style="left:491.8px;top:538px;width:4.5px;height:40px;background:#9c9c9c;border-radius:2px"></div>
<svg style="left:491.5px;top:407px" width="5" height="4"><polyline points="0.5,3 2.25,1 4,3" fill="none" stroke="#555" stroke-width="0.9"/></svg>
<svg style="left:491.5px;top:582px" width="5" height="4"><polyline points="0.5,1 2.25,3 4,1" fill="none" stroke="#555" stroke-width="0.9"/></svg>
<div class="t s" style="left:641px;top:151.24px;font-size:8.1px;line-height:10.53px;color:#9c9c9c;font-weight:normal;font-family:'Liberation Sans',sans-serif;transform:scaleY(1.120);-webkit-text-stroke:0.1px #9c9c9c">Environment is empty</div>
<div class="t s" style="left:78.6px;top:85.5px;width:69.9px;height:14px;background:#f5f7f9;border:1px solid #d8dbde;border-bottom:none;border-radius:3px 3px 0 0"></div>
<svg style="left:83px;top:87.5px" width="11" height="10"><path d="M2.5,1 H7 L9.5,3.5 V9.5 H2.5 Z" fill="#fff" stroke="#9aa0a6" stroke-width="0.7"/><circle cx="3.5" cy="3.2" r="2.3" fill="#4a6fb0"/><rect x="3" y="2" width="1" height="2.5" fill="#fff"/></svg>
<div class="t s" style="left:95.8px;top:87.42px;font-size:7.05px;line-height:9.17px;color:#333;font-weight:normal;font-family:'Liberation Sans',sans-serif;transform:scaleY(1.120);">mnist_cnn.R</div>
<svg style="left:138.5px;top:90.5px" width="5" height="5"><path d="M0.5,0.5 L4,4 M4,0.5 L0.5,4" stroke="#aaa" stroke-width="0.8"/></svg>
<div class="t s" style="left:78.6px;top:377.5px;width:39.60000000000001px;height:14px;background:#f5f7f9;border:1px solid #d8dbde;border-bottom:none;border-radius:3px 3px 0 0"></div>
<div class="t s" style="left:168px;top:379.0px;width:1px;height:12.5px;background:#d4d7da"></div>
<div class="t s" style="left:84.2px;top:380.29px;font-size:7.25px;line-height:9.43px;color:#222;font-weight:bold;font-family:'Liberation Sans',sans-serif;transform:scaleY(1.120);">Console</div>
<div class="t s" style="left:124.7px;top:380.29px;font-size:7.25px;line-height:9.43px;color:#333;font-weight:bold;font-family:'Liberation Sans',sans-serif;transform:scaleY(1.120);">Terminal</div>
<svg style="left:160.5px;top:382.5px" width="5" height="5"><path d="M0.5,0.5 L4,4 M4,0.5 L0.5,4" stroke="#aaa" stroke-width="0.8"/></svg>
<div class="t s" style="left:502.2px;top:85.5px;width:58.80000000000001px;height:14px;background:#f5f7f9;border:1px solid #d8dbde;border-bottom:none;border-radius:3px 3px 0 0"></div>
<div class="t s" style="left:597px;top:87.0px;width:1px;height:12.5px;background:#d4d7da"></div>
<div class="t s" style="left:654.5px;top:87.0px;width:1px;height:12.5px;background:#d4d7da"></div>
<div class="t s" style="left:508.3px;top:88.09px;font-size:7.4px;line-height:9.62px;color:#222;font-weight:bold;font-family:'Liberation Sans',sans-serif;transform:scaleY(1.120);">Environment</div>
<div class="t s" style="left:566.7px;top:88.09px;font-size:7.4px;line-height:9.62px;color:#333;font-weight:bold;font-family:'Liberation Sans',sans-serif;transform:scaleY(1.120);">History</div>
<div class="t s" style="left:604.7px;top:88.09px;font-size:7.4px;line-height:9.62px;color:#333;font-weight:bold;font-family:'Liberation Sans',sans-serif;transform:scaleY(1.120);">Connections</div>
<div class="t s" style="left:530.3px;top:319.0px;width:1px;height:12.5px;background:#d4d7da"></div>
<div class="t s" style="left:560px;top:319.0px;width:1px;height:12.5px;background:#d4d7da"></div>
<div class="t s" style="left:606px;top:319.0px;width:1px;height:12.5px;background:#d4d7da"></div>
<div class="t s" style="left:634.5px;top:319.0px;width:1px;height:12.5px;background:#d4d7da"></div>
<div class="t s" style="left:635.5px;top:317.5px;width:36.5px;height:14px;background:#f5f7f9;border:1px solid #d8dbde;border-bottom:none;border-radius:3px 3px 0 0"></div>
<div class="t s" style="left:508.5px;top:320.09px;font-size:7.4px;line-height:9.62px;color:#333;font-weight:bold;font-family:'Liberation Sans',sans-serif;transform:scaleY(1.120);">Files</div>
<div class="t s" style="left:537px;top:320.09px;font-size:7.4px;line-height:9.62px;color:#333;font-weight:bold;font-family:'Liberation Sans',sans-serif;transform:scaleY(1.120);">Plots</div>
<div class="t s" style="left:567.4px;top:320.09px;font-size:7.4px;line-height:9.62px;color:#333;font-weight:bold;font-family:'Liberation Sans',sans-serif;transform:scaleY(1.120);">Packages</div>
<div class="t s" style="left:613.2px;top:320.09px;font-size:7.4px;line-height:9.62px;color:#333;font-weight:bold;font-family:'Liberation Sans',sans-serif;transform:scaleY(1.120);">Help</div>
<div class="t s" style="left:641.5px;top:320.09px;font-size:7.4px;line-height:9.62px;color:#222;font-weight:bold;font-family:'Liberation Sans',sans-serif;transform:scaleY(1.120);">Viewer</div>
<svg style="left:473.3px;top:90.2px" width="21" height="8"><rect x="0.5" y="3.5" width="8.2" height="3.4" fill="#d0d3d6" stroke="#8a8e92" stroke-width="0.7"/><rect x="10.5" y="0.5" width="9" height="6.6" rx="0.6" fill="#f4f5f6" stroke="#8e9296" stroke-width="0.7"/><rect x="10.5" y="0.5" width="9" height="1.4" fill="#8e9296"/></svg>
<svg style="left:473.3px;top:382.2px" width="21" height="8"><rect x="0.5" y="3.5" width="8.2" height="3.4" fill="#d0d3d6" stroke="#8a8e92" stroke-width="0.7"/><rect x="10.5" y="0.5" width="9" height="6.6" rx="0.6" fill="#f4f5f6" stroke="#8e9296" stroke-width="0.7"/><rect x="10.5" y="0.5" width="9" height="1.4" fill="#8e9296"/></svg>
<svg style="left:832.8px;top:90.2px" width="21" height="8"><rect x="0.5" y="3.5" width="8.2" height="3.4" fill="#d0d3d6" stroke="#8a8e92" stroke-width="0.7"/><rect x="10.5" y="0.5" width="9" height="6.6" rx="0.6" fill="#f4f5f6" stroke="#8e9296" stroke-width="0.7"/><rect x="10.5" y="0.5" width="9" height="1.4" fill="#8e9296"/></svg>
<svg style="left:832.8px;top:322.2px" width="21" height="8"><rect x="0.5" y="3.5" width="8.2" height="3.4" fill="#d0d3d6" stroke="#8a8e92" stroke-width="0.7"/><rect x="10.5" y="0.5" width="9" height="6.6" rx="0.6" fill="#f4f5f6" stroke="#8e9296" stroke-width="0.7"/><rect x="10.5" y="0.5" width="9" height="1.4" fill="#8e9296"/></svg>
<svg style="left:0;top:0" width="960" height="633" viewBox="0 0 960 633">
<path d="M538,352 V438.5 M535.5,438.5 H840 M535.5,352 H538" stroke="#333" stroke-width="0.9" fill="none"/>
<path d="M535.5,362.00 H538" stroke="#333" stroke-width="0.9"/>
<text x="532.3" y="364.90" text-anchor="end" font-size="7.1" fill="#222">0.3</text>
<path d="M535.5,375.25 H538" stroke="#333" stroke-width="0.9"/>
<text x="532.3" y="378.15" text-anchor="end" font-size="7.1" fill="#222">0.25</text>
<path d="M535.5,388.50 H538" stroke="#333" stroke-width="0.9"/>
<text x="532.3" y="391.40" text-anchor="end" font-size="7.1" fill="#222">0.2</text>
<path d="M535.5,401.75 H538" stroke="#333" stroke-width="0.9"/>
<text x="532.3" y="404.65" text-anchor="end" font-size="7.1" fill="#222">0.15</text>
<path d="M535.5,415.00 H538" stroke="#333" stroke-width="0.9"/>
<text x="532.3" y="417.90" text-anchor="end" font-size="7.1" fill="#222">0.1</text>
<path d="M535.5,428.25 H538" stroke="#333" stroke-width="0.9"/>
<text x="532.3" y="431.15" text-anchor="end" font-size="7.1" fill="#222">0.05</text>
<path d="M540.75,438.5 V441.5" stroke="#333" stroke-width="0.9"/>
<text x="540.75" y="448.8" text-anchor="middle" font-size="7.1" fill="#222">1</text>
<path d="M567.82,438.5 V441.5" stroke="#333" stroke-width="0.9"/>
<text x="567.82" y="448.8" text-anchor="middle" font-size="7.1" fill="#222">2</text>
<path d="M594.89,438.5 V441.5" stroke="#333" stroke-width="0.9"/>
<text x="594.89" y="448.8" text-anchor="middle" font-size="7.1" fill="#222">3</text>
<path d="M621.96,438.5 V441.5" stroke="#333" stroke-width="0.9"/>
<text x="621.96" y="448.8" text-anchor="middle" font-size="7.1" fill="#222">4</text>
<path d="M649.03,438.5 V441.5" stroke="#333" stroke-width="0.9"/>
<text x="649.03" y="448.8" text-anchor="middle" font-size="7.1" fill="#222">5</text>
<path d="M676.10,438.5 V441.5" stroke="#333" stroke-width="0.9"/>
<text x="676.10" y="448.8" text-anchor="middle" font-size="7.1" fill="#222">6</text>
<path d="M703.17,438.5 V441.5" stroke="#333" stroke-width="0.9"/>
<text x="703.17" y="448.8" text-anchor="middle" font-size="7.1" fill="#222">7</text>
<path d="M730.24,438.5 V441.5" stroke="#333" stroke-width="0.9"/>
<text x="730.24" y="448.8" text-anchor="middle" font-size="7.1" fill="#222">8</text>
<path d="M757.31,438.5 V441.5" stroke="#333" stroke-width="0.9"/>
<text x="757.31" y="448.8" text-anchor="middle" font-size="7.1" fill="#222">9</text>
<path d="M784.38,438.5 V441.5" stroke="#333" stroke-width="0.9"/>
<text x="784.38" y="448.8" text-anchor="middle" font-size="7.1" fill="#222">10</text>
<path d="M811.45,438.5 V441.5" stroke="#333" stroke-width="0.9"/>
<text x="811.45" y="448.8" text-anchor="middle" font-size="7.1" fill="#222">11</text>
<path d="M838.52,438.5 V441.5" stroke="#333" stroke-width="0.9"/>
<text x="838.52" y="448.8" text-anchor="middle" font-size="7.1" fill="#222">12</text>
<path d="M839.82,436 V441.5" stroke="#333" stroke-width="0.9"/>
<polyline points="540.75,359.22 567.82,415.80 594.89,422.90 621.96,426.13 649.03,428.36 676.10,430.03 703.17,431.03" fill="none" stroke="#4aa3ee" stroke-width="0.8"/>
<circle cx="540.75" cy="359.22" r="1.4" fill="#4aa3ee"/>
<circle cx="567.82" cy="415.80" r="1.4" fill="#4aa3ee"/>
<circle cx="594.89" cy="422.90" r="1.4" fill="#4aa3ee"/>
<circle cx="621.96" cy="426.13" r="1.4" fill="#4aa3ee"/>
<circle cx="649.03" cy="428.36" r="1.4" fill="#4aa3ee"/>
<circle cx="676.10" cy="430.03" r="1.4" fill="#4aa3ee"/>
<circle cx="703.17" cy="431.03" r="1.4" fill="#4aa3ee"/>
<polyline points="540.75,421.62 567.82,428.44 594.89,430.00 621.96,430.50 649.03,431.01 676.10,431.11 703.17,431.32" fill="none" stroke="#5cb85c" stroke-width="0.8"/>
<circle cx="540.75" cy="421.62" r="1.4" fill="#5cb85c"/>
<circle cx="567.82" cy="428.44" r="1.4" fill="#5cb85c"/>
<circle cx="594.89" cy="430.00" r="1.4" fill="#5cb85c"/>
<circle cx="621.96" cy="430.50" r="1.4" fill="#5cb85c"/>
<circle cx="649.03" cy="431.01" r="1.4" fill="#5cb85c"/>
<circle cx="676.10" cy="431.11" r="1.4" fill="#5cb85c"/>
<circle cx="703.17" cy="431.32" r="1.4" fill="#5cb85c"/>
<rect x="641" y="455" width="6" height="5.8" fill="#4aa3ee"/><text x="649.5" y="460.8" font-size="8" fill="#333">loss</text>
<rect x="669.5" y="455" width="6" height="5.8" fill="#5cb85c"/><text x="678" y="460.8" font-size="8" fill="#333">val_loss</text>
<path d="M537.5,469.5 V556.3 M535,556.3 H840 M535,469.5 H537.5" stroke="#333" stroke-width="0.9" fill="none"/>
<path d="M535,553.00 H537.5" stroke="#333" stroke-width="0.9"/>
<text x="532" y="555.90" text-anchor="end" font-size="7.1" fill="#222">0.9</text>
<path d="M535,544.77 H537.5" stroke="#333" stroke-width="0.9"/>
<text x="532" y="547.67" text-anchor="end" font-size="7.1" fill="#222">0.91</text>
<path d="M535,536.55 H537.5" stroke="#333" stroke-width="0.9"/>
<text x="532" y="539.45" text-anchor="end" font-size="7.1" fill="#222">0.92</text>
<path d="M535,528.32 H537.5" stroke="#333" stroke-width="0.9"/>
<text x="532" y="531.22" text-anchor="end" font-size="7.1" fill="#222">0.93</text>
<path d="M535,520.10 H537.5" stroke="#333" stroke-width="0.9"/>
<text x="532" y="523.00" text-anchor="end" font-size="7.1" fill="#222">0.94</text>
<path d="M535,511.87 H537.5" stroke="#333" stroke-width="0.9"/>
<text x="532" y="514.77" text-anchor="end" font-size="7.1" fill="#222">0.95</text>
<path d="M535,503.65 H537.5" stroke="#333" stroke-width="0.9"/>
<text x="532" y="506.55" text-anchor="end" font-size="7.1" fill="#222">0.96</text>
<path d="M535,495.43 H537.5" stroke="#333" stroke-width="0.9"/>
<text x="532" y="498.33" text-anchor="end" font-size="7.1" fill="#222">0.97</text>
<path d="M535,487.20 H537.5" stroke="#333" stroke-width="0.9"/>
<text x="532" y="490.10" text-anchor="end" font-size="7.1" fill="#222">0.98</text>
<path d="M535,478.98 H537.5" stroke="#333" stroke-width="0.9"/>
<text x="532" y="481.88" text-anchor="end" font-size="7.1" fill="#222">0.99</text>
<path d="M535,470.75 H537.5" stroke="#333" stroke-width="0.9"/>
<text x="532" y="473.65" text-anchor="end" font-size="7.1" fill="#222">1</text>
<path d="M540.75,556.3 V559.3" stroke="#333" stroke-width="0.9"/>
<text x="540.75" y="566.8" text-anchor="middle" font-size="7.1" fill="#222">1</text>
<path d="M567.82,556.3 V559.3" stroke="#333" stroke-width="0.9"/>
<text x="567.82" y="566.8" text-anchor="middle" font-size="7.1" fill="#222">2</text>
<path d="M594.89,556.3 V559.3" stroke="#333" stroke-width="0.9"/>
<text x="594.89" y="566.8" text-anchor="middle" font-size="7.1" fill="#222">3</text>
<path d="M621.96,556.3 V559.3" stroke="#333" stroke-width="0.9"/>
<text x="621.96" y="566.8" text-anchor="middle" font-size="7.1" fill="#222">4</text>
<path d="M649.03,556.3 V559.3" stroke="#333" stroke-width="0.9"/>
<text x="649.03" y="566.8" text-anchor="middle" font-size="7.1" fill="#222">5</text>
<path d="M676.10,556.3 V559.3" stroke="#333" stroke-width="0.9"/>
<text x="676.10" y="566.8" text-anchor="middle" font-size="7.1" fill="#222">6</text>
<path d="M703.17,556.3 V559.3" stroke="#333" stroke-width="0.9"/>
<text x="703.17" y="566.8" text-anchor="middle" font-size="7.1" fill="#222">7</text>
<path d="M730.24,556.3 V559.3" stroke="#333" stroke-width="0.9"/>
<text x="730.24" y="566.8" text-anchor="middle" font-size="7.1" fill="#222">8</text>
<path d="M757.31,556.3 V559.3" stroke="#333" stroke-width="0.9"/>
<text x="757.31" y="566.8" text-anchor="middle" font-size="7.1" fill="#222">9</text>
<path d="M784.38,556.3 V559.3" stroke="#333" stroke-width="0.9"/>
<text x="784.38" y="566.8" text-anchor="middle" font-size="7.1" fill="#222">10</text>
<path d="M811.45,556.3 V559.3" stroke="#333" stroke-width="0.9"/>
<text x="811.45" y="566.8" text-anchor="middle" font-size="7.1" fill="#222">11</text>
<path d="M838.52,556.3 V559.3" stroke="#333" stroke-width="0.9"/>
<text x="838.52" y="566.8" text-anchor="middle" font-size="7.1" fill="#222">12</text>
<path d="M839.82,553.8 V559.3" stroke="#333" stroke-width="0.9"/>
<polyline points="540.75,548.48 567.82,493.62 594.89,487.69 621.96,484.81 649.03,482.92 676.10,482.02 703.17,480.46" fill="none" stroke="#4aa3ee" stroke-width="0.8"/>
<circle cx="540.75" cy="548.48" r="1.4" fill="#4aa3ee"/>
<circle cx="567.82" cy="493.62" r="1.4" fill="#4aa3ee"/>
<circle cx="594.89" cy="487.69" r="1.4" fill="#4aa3ee"/>
<circle cx="621.96" cy="484.81" r="1.4" fill="#4aa3ee"/>
<circle cx="649.03" cy="482.92" r="1.4" fill="#4aa3ee"/>
<circle cx="676.10" cy="482.02" r="1.4" fill="#4aa3ee"/>
<circle cx="703.17" cy="480.46" r="1.4" fill="#4aa3ee"/>
<polyline points="540.75,488.85 567.82,482.84 594.89,481.44 621.96,480.54 649.03,479.80 676.10,479.55 703.17,479.63" fill="none" stroke="#5cb85c" stroke-width="0.8"/>
<circle cx="540.75" cy="488.85" r="1.4" fill="#5cb85c"/>
<circle cx="567.82" cy="482.84" r="1.4" fill="#5cb85c"/>
<circle cx="594.89" cy="481.44" r="1.4" fill="#5cb85c"/>
<circle cx="621.96" cy="480.54" r="1.4" fill="#5cb85c"/>
<circle cx="649.03" cy="479.80" r="1.4" fill="#5cb85c"/>
<circle cx="676.10" cy="479.55" r="1.4" fill="#5cb85c"/>
<circle cx="703.17" cy="479.63" r="1.4" fill="#5cb85c"/>
<rect x="642" y="573.5" width="6" height="5.8" fill="#4aa3ee"/><text x="651" y="579.2" font-size="8" fill="#333">acc</text>
<rect x="669.5" y="573.5" width="6" height="5.8" fill="#5cb85c"/><text x="678" y="579.2" font-size="8" fill="#333">val_acc</text>
</svg>
<div class="t s" style="left:849.5px;top:344.5px;width:7px;height:243px;background:#d9d9d9"></div>
<div class="t s" style="left:850.8px;top:353px;width:4.6px;height:222px;background:#9c9c9c;border-radius:2px"></div>
<svg style="left:850.5px;top:347px" width="5" height="4"><polyline points="0.5,3 2.25,1 4,3" fill="none" stroke="#555" stroke-width="0.9"/></svg>
<svg style="left:850.5px;top:581px" width="5" height="4"><polyline points="0.5,1 2.25,3 4,1" fill="none" stroke="#555" stroke-width="0.9"/></svg>
<svg style="left:76px;top:68.5px" width="12" height="10" viewBox="0 0 12 10"><rect x="4" y="2" width="7" height="7.5" fill="#fff" stroke="#e0e0e0" stroke-width="0.5"/><circle cx="4.8" cy="4.5" r="3.3" fill="#2aa05a"/><path d="M4.8,2.7 V6.3 M3,4.5 H6.6" stroke="#fff" stroke-width="1.1"/></svg>
<svg style="left:92.60px;top:73.20px" width="4" height="3"><polygon points="0,0 3.2,0 1.6,2" fill="#333"/></svg>
<div class="t s" style="left:98.3px;top:69.5px;width:0.8px;height:9.5px;background:#dde0e3"></div>
<svg style="left:102px;top:68.5px" width="14" height="11" viewBox="0 0 14 11"><path d="M6,3 L10.5,1.5 L13.5,3.5 V8.5 L9,10.5 L6,8.5 Z" fill="#8cc4ea" opacity="0.9"/><path d="M9,4.5 V10.5" stroke="#5aa0d8" stroke-width="0.6"/><circle cx="4.5" cy="4" r="3.3" fill="#2aa05a"/><path d="M4.5,2.2 V5.8 M2.7,4 H6.3" stroke="#fff" stroke-width="1.1"/></svg>
<div class="t s" style="left:118px;top:69.5px;width:0.8px;height:9.5px;background:#dde0e3"></div>
<svg style="left:122.5px;top:68.5px" width="14" height="11" viewBox="0 0 14 11"><path d="M1,4 H5 L6,5 H11 V9.5 H1 Z" fill="#e8c060"/><path d="M1.5,10 L3.5,6 H13 L11,10 Z" fill="#f4d880"/><path d="M7,4 Q9,2 11.5,2.5" stroke="#2aa05a" stroke-width="1.4" fill="none"/><polygon points="11,0.5 13.8,2.8 10.8,4.5" fill="#2aa05a"/></svg>
<svg style="left:139.00px;top:73.20px" width="4" height="3"><polygon points="0,0 3.2,0 1.6,2" fill="#333"/></svg>
<div class="t s" style="left:145.5px;top:69.5px;width:0.8px;height:9.5px;background:#dde0e3"></div>
<svg style="left:151px;top:69px" width="10" height="10" viewBox="0 0 10 10"><path d="M0.5,0.5 H8 L9.5,2 V9.5 H0.5 Z" fill="#cfe0f0" stroke="#a8c4e0" stroke-width="0.6"/><rect x="2.5" y="1" width="5" height="3" fill="#fff"/><rect x="2" y="6" width="6" height="3.5" fill="#e8f0f8"/></svg>
<svg style="left:167px;top:69px" width="11" height="10" viewBox="0 0 11 10"><path d="M2.5,0.5 H9 L10.5,2 V8 H2.5 Z" fill="#d8e6f2" stroke="#b4cce2" stroke-width="0.6"/><path d="M0.5,2.5 H7 L8.5,4 V9.5 H0.5 Z" fill="#cfe0f0" stroke="#a8c4e0" stroke-width="0.6"/></svg>
<div class="t s" style="left:182px;top:69.5px;width:0.8px;height:9.5px;background:#dde0e3"></div>
<svg style="left:186.5px;top:69px" width="11" height="10" viewBox="0 0 11 10"><rect x="2.5" y="0.5" width="6" height="4" fill="#f4f4f4" stroke="#c8ccd0" stroke-width="0.5"/><rect x="0.5" y="4" width="10" height="4.5" rx="1" fill="#b8bec6"/><rect x="2" y="7.5" width="7" height="2" fill="#e6e8ea"/></svg>
<div class="t s" style="left:201.5px;top:69.5px;width:0.8px;height:9.5px;background:#dde0e3"></div>
<div class="t s" style="left:205.7px;top:69.8px;width:85.6px;height:9.5px;background:#fff;border:1px solid #dde0e3;border-radius:2px"></div>
<svg style="left:210px;top:71.5px" width="7" height="6" viewBox="0 0 7 6"><path d="M0.5,5.5 Q1,2.2 4,2.2 V0.5 L6.6,3 L4,5.5 V3.8 Q2,3.8 0.5,5.5 Z" fill="#9aa4ae"/></svg>
<div class="t s" style="left:222.3px;top:70.24px;font-size:7.32px;line-height:9.52px;color:#b8bcc0;font-weight:normal;font-family:'Liberation Sans',sans-serif;transform:scaleY(1.120);">Go to file/function</div>
<div class="t s" style="left:296.5px;top:69.5px;width:0.8px;height:9.5px;background:#dde0e3"></div>
<svg style="left:301.5px;top:69.5px" width="10" height="9" viewBox="0 0 10 9"><rect x="0.5" y="0.5" width="9" height="8" fill="#f2f4f6" stroke="#c0c6cc" stroke-width="0.7"/><path d="M5,0.5 V8.5 M0.5,4.5 H9.5" stroke="#c0c6cc" stroke-width="0.7"/></svg>
<svg style="left:316.40px;top:73.20px" width="4" height="3"><polygon points="0,0 3.2,0 1.6,2" fill="#333"/></svg>
<div class="t s" style="left:324.7px;top:70.11px;font-size:6.3px;line-height:8.19px;color:#333;font-weight:bold;font-family:'Liberation Sans',sans-serif;transform:scaleY(1.120);">Addins</div>
<svg style="left:351.10px;top:73.20px" width="4" height="3"><polygon points="0,0 3.2,0 1.6,2" fill="#333"/></svg>
<svg style="left:789.5px;top:69.3px" width="9.5" height="9" viewBox="0 0 9.5 9"><polygon points="4.75,0.3 9.2,2.5 9.2,6.5 4.75,8.7 0.3,6.5 0.3,2.5" fill="#9dcdef"/><text x="4.75" y="6.6" text-anchor="middle" font-size="6" font-family="Liberation Serif" fill="#2a5a90">R</text></svg>
<div class="t s" style="left:801.8px;top:69.59px;font-size:7.1px;line-height:9.23px;color:#555;font-weight:normal;font-family:'Liberation Sans',sans-serif;transform:scaleY(1.120);">Project: (None)</div>
<svg style="left:854.20px;top:73.70px" width="4" height="3"><polygon points="0,0 3.2,0 1.6,2" fill="#333"/></svg>
<svg style="left:85px;top:101.5px" width="22" height="9" viewBox="0 0 22 9"><path d="M1,4.5 L4.5,1 V3 H8.5 V6 H4.5 V8 Z" fill="none" stroke="#d8dde2" stroke-width="0.8"/><path d="M20,4.5 L16.5,1 V3 H12.5 V6 H16.5 V8 Z" fill="none" stroke="#d8dde2" stroke-width="0.8"/></svg>
<div class="t s" style="left:111.3px;top:102px;width:0.8px;height:9px;background:#dde0e3"></div>
<svg style="left:117px;top:101.5px" width="10" height="9" viewBox="0 0 10 9"><rect x="2.5" y="0.5" width="7" height="6" fill="#fff" stroke="#b8c0c8" stroke-width="0.6"/><rect x="2.5" y="0.5" width="7" height="1.6" fill="#b8c0c8"/><path d="M0.5,8.5 L4,5" stroke="#9aa4ae" stroke-width="0.9"/></svg>
<div class="t s" style="left:131.5px;top:102px;width:0.8px;height:9px;background:#dde0e3"></div>
<svg style="left:138px;top:101.8px" width="8.5" height="9" viewBox="0 0 8.5 9"><path d="M0.5,0.5 H7 L8,1.5 V8.5 H0.5 Z" fill="#cfe0f0" stroke="#a8c4e0" stroke-width="0.6"/><rect x="2" y="1" width="4.5" height="2.5" fill="#fff"/><rect x="1.8" y="5" width="5" height="3" fill="#e8f0f8"/></svg>
<div class="t s" style="left:153.3px;top:101.8px;width:8.5px;height:8.7px;background:#fff;border:1px solid #b4b8bc;border-radius:1.5px"></div>
<div class="t s" style="left:163.2px;top:101.15px;font-size:7.0px;line-height:9.1px;color:#333;font-weight:normal;font-family:'Liberation Sans',sans-serif;transform:scaleY(1.120);">Source on Save</div>
<div class="t s" style="left:221.7px;top:102px;width:0.8px;height:9px;background:#dde0e3"></div>
<svg style="left:228.5px;top:101.3px" width="9.5" height="9.5" viewBox="0 0 9.5 9.5"><circle cx="3.8" cy="3.8" r="2.8" fill="#d6e8f6" stroke="#6a98c8" stroke-width="0.9"/><path d="M5.8,5.8 L8.6,8.8" stroke="#a8683a" stroke-width="1.7"/></svg>
<svg style="left:243.5px;top:101.3px" width="12" height="10" viewBox="0 0 12 10"><path d="M1.2,9.3 L7.2,3.3" stroke="#3e5878" stroke-width="1.7" stroke-linecap="round"/><path d="M1.2,9.3 L3,7.5" stroke="#5aa0d0" stroke-width="1.7" stroke-linecap="round"/><path d="M8.2,0.8 L8.5,2.2 M10.8,2.8 L9.3,3.2 M10.3,1 L9.3,2.1 M8.8,4.8 L8.3,3.8" stroke="#f08060" stroke-width="0.7"/></svg>
<svg style="left:257.90px;top:105.20px" width="4" height="3"><polygon points="0,0 3.2,0 1.6,2" fill="#333"/></svg>
<div class="t s" style="left:265px;top:102px;width:0.8px;height:9px;background:#dde0e3"></div>
<svg style="left:271.5px;top:102px" width="9" height="9" viewBox="0 0 9 9"><rect x="0.5" y="0.5" width="8" height="8" fill="#f6f7f8" stroke="#c8ccd0" stroke-width="0.6"/><path d="M2.5,0.5 V8.5 M3.5,2.5 H7.5 M3.5,4.5 H7.5 M3.5,6.5 H7.5" stroke="#c8ccd0" stroke-width="0.6"/></svg>
<svg style="left:369.5px;top:102.5px" width="11" height="7" viewBox="0 0 11 7"><rect x="0.5" y="2.5" width="4" height="2" fill="#d8dde2"/><path d="M3.5,3.5 H8" stroke="#2aa05a" stroke-width="1.4"/><polygon points="7,0.5 10.5,3.5 7,6.5" fill="#2aa05a"/></svg>
<div class="t s" style="left:381.9px;top:101.95px;font-size:7.0px;line-height:9.1px;color:#333;font-weight:normal;font-family:'Liberation Sans',sans-serif;transform:scaleY(1.120);">Run</div>
<div class="t s" style="left:401.6px;top:102px;width:0.8px;height:9px;background:#dde0e3"></div>
<svg style="left:407.5px;top:102px" width="11" height="8" viewBox="0 0 11 8"><path d="M1.5,2.5 H5" stroke="#2f6cc0" stroke-width="1.2"/><polygon points="0.2,2.5 2.5,0.3 2.5,4.7" fill="#2f6cc0"/><path d="M5,5 H8.5" stroke="#2aa05a" stroke-width="1.4"/><polygon points="8,2.3 10.8,5 8,7.7" fill="#2aa05a"/></svg>
<div class="t s" style="left:422.4px;top:102px;width:0.8px;height:9px;background:#dde0e3"></div>
<svg style="left:426px;top:101.8px" width="11" height="9" viewBox="0 0 11 9"><path d="M0.5,0.5 H5.5 L7,2 V8.5 H0.5 Z" fill="#fff" stroke="#c8ccd0" stroke-width="0.5"/><path d="M4,4.5 H8" stroke="#72aee6" stroke-width="1.5"/><polygon points="7.5,2 10.7,4.5 7.5,7" fill="#72aee6"/></svg>
<div class="t s" style="left:440px;top:101.88px;font-size:6.8px;line-height:8.84px;color:#333;font-weight:normal;font-family:'Liberation Sans',sans-serif;transform:scaleY(1.120);">Source</div>
<svg style="left:468.90px;top:105.40px" width="4" height="3"><polygon points="0,0 3.2,0 1.6,2" fill="#333"/></svg>
<div class="t s" style="left:475.6px;top:102px;width:0.8px;height:9px;background:#dde0e3"></div>
<svg style="left:483px;top:102px" width="7" height="8" viewBox="0 0 7 8"><path d="M0,1.5 H7 M2,3.5 H7 M2,5.5 H7 M0,7.5 H7" stroke="#b8bcc0" stroke-width="0.7"/></svg>
<div class="t s" style="left:86.5px;top:393.51px;font-size:6.6px;line-height:8.58px;color:#9aa0a6;font-weight:normal;font-family:'Liberation Sans',sans-serif;transform:scaleY(1.120);">~/</div>
<svg style="left:97.7px;top:394.5px" width="7.5" height="6.5" viewBox="0 0 7.5 6.5"><path d="M0.5,6 Q1,2.5 4,2.5 V0.5 L7,3.3 L4,6 V4.2 Q2,4.2 0.5,6 Z" fill="none" stroke="#c4c8cc" stroke-width="0.7"/></svg>
<svg style="left:468px;top:393.5px" width="8.5" height="8.5" viewBox="0 0 8.5 8.5"><circle cx="4.25" cy="4.25" r="4" fill="#dc3545"/><rect x="2" y="3.3" width="4.5" height="2" fill="#f0a0a8"/></svg>
<svg style="left:482px;top:392px" width="12" height="11" viewBox="0 0 12 11"><path d="M1,10.5 L4.5,7 L7,9 Z" fill="#e4e6e8" stroke="#c8ccd0" stroke-width="0.5"/><path d="M5.5,7.5 L11,1.5" stroke="#d0d4d8" stroke-width="0.8"/></svg>
<svg style="left:507.5px;top:101.5px" width="13" height="10" viewBox="0 0 13 10"><path d="M1,3.5 H5 L6,4.5 H10 V9 H1 Z" fill="#e8c060"/><path d="M1.5,9.5 L3.5,5.5 H12.5 L10.5,9.5 Z" fill="#f4d880"/><path d="M6.5,4 Q8.5,1.5 11,2" stroke="#2aa05a" stroke-width="1.4" fill="none"/><polygon points="10.5,0.2 13,2.3 10.2,4" fill="#2aa05a"/></svg>
<svg style="left:525px;top:101.8px" width="8.5" height="9" viewBox="0 0 8.5 9"><path d="M0.5,0.5 H7 L8,1.5 V8.5 H0.5 Z" fill="#4a8ad4" stroke="#3a70b8" stroke-width="0.6"/><rect x="2" y="1" width="4.5" height="2.8" fill="#fff"/><rect x="1.8" y="5" width="5" height="3" fill="#d8e8f8"/></svg>
<div class="t s" style="left:538.5px;top:102px;width:0.8px;height:9px;background:#dde0e3"></div>
<svg style="left:543px;top:101.8px" width="12" height="9" viewBox="0 0 12 9"><rect x="0.5" y="1.5" width="8" height="7" fill="#fff" stroke="#b4bcc4" stroke-width="0.6"/><path d="M0.5,4 H8.5 M0.5,6.2 H8.5 M3,1.5 V8.5 M5.7,1.5 V8.5" stroke="#b4bcc4" stroke-width="0.5"/><path d="M4,5 Q6,1.5 9.5,2" stroke="#2aa05a" stroke-width="1.4" fill="none"/><polygon points="9,0 11.8,2.2 9,4" fill="#2aa05a"/></svg>
<div class="t s" style="left:555.2px;top:101.39px;font-size:7.4px;line-height:9.62px;color:#333;font-weight:normal;font-family:'Liberation Sans',sans-serif;transform:scaleY(1.120);">Import Dataset</div>
<svg style="left:607.20px;top:105.70px" width="4" height="3"><polygon points="0,0 3.2,0 1.6,2" fill="#333"/></svg>
<div class="t s" style="left:615.8px;top:102px;width:0.8px;height:9px;background:#dde0e3"></div>
<svg style="left:621.3px;top:101px" width="10" height="10.5" viewBox="0 0 10 10.5"><path d="M9.5,0.5 L5,5.5" stroke="#c0392b" stroke-width="1"/><path d="M1,9.8 Q1.5,6 4.5,5 L6,6.5 Q5,9.5 1,9.8 Z" fill="#e0a030"/></svg>
<svg style="left:806px;top:102px" width="7" height="8" viewBox="0 0 7 8"><path d="M0,1.5 H7 M0,3.5 H7 M0,5.5 H7 M0,7.5 H7" stroke="#b0b4b8" stroke-width="0.75"/></svg>
<div class="t s" style="left:816.7px;top:101.69px;font-size:6.94px;line-height:9.02px;color:#333;font-weight:normal;font-family:'Liberation Sans',sans-serif;transform:scaleY(1.120);">List</div>
<svg style="left:831.20px;top:105.70px" width="4" height="3"><polygon points="0,0 3.2,0 1.6,2" fill="#333"/></svg>
<div class="t s" style="left:839.5px;top:102px;width:0.8px;height:9px;background:#dde0e3"></div>
<svg style="left:844px;top:101.5px" width="10" height="10" viewBox="0 0 10 10"><circle cx="5" cy="5" r="3.8" fill="none" stroke="#c4d4e8" stroke-width="1.2"/><path d="M5,2.5 V5 H7" stroke="#c4d4e8" stroke-width="0.9" fill="none"/></svg>
<svg style="left:507.5px;top:114.8px" width="10" height="10" viewBox="0 0 10 10"><rect x="2.8" y="0.5" width="5.5" height="5.5" fill="#b060c0"/><rect x="0.5" y="3" width="5.5" height="5.5" fill="#90c070"/><rect x="4" y="4.5" width="5.5" height="5" fill="#4a8ad4" opacity="0.95"/></svg>
<div class="t s" style="left:519.3px;top:114.06px;font-size:7.29px;line-height:9.48px;color:#333;font-weight:normal;font-family:'Liberation Sans',sans-serif;transform:scaleY(1.120);">Global Environment</div>
<svg style="left:586.90px;top:118.30px" width="4" height="3"><polygon points="0,0 3.2,0 1.6,2" fill="#333"/></svg>
<div class="t s" style="left:780.8px;top:114.5px;width:71px;height:10px;background:#fff;border:1px solid #dde0e3;border-radius:2px"></div>
<svg style="left:784.5px;top:116px" width="7" height="7" viewBox="0 0 7 7"><circle cx="2.8" cy="2.8" r="2" fill="none" stroke="#a8acb0" stroke-width="0.9"/><path d="M4.2,4.2 L6.5,6.5" stroke="#a8acb0" stroke-width="1"/></svg>
<svg style="left:508.5px;top:334px" width="26" height="8" viewBox="0 0 26 8"><path d="M0.5,4 L4.5,0.5 V2.5 H9 V5.5 H4.5 V7.5 Z" fill="#dfe8f2"/><path d="M25,4 L21,0.5 V2.5 H16.5 V5.5 H21 V7.5 Z" fill="#dfe8f2"/></svg>
<div class="t s" style="left:538.6px;top:334px;width:0.8px;height:8.5px;background:#dde0e3"></div>
<svg style="left:543.4px;top:333.5px" width="10" height="10" viewBox="0 0 10 10"><circle cx="6" cy="3.8" r="2.8" fill="#c8e6d8" stroke="#2a8a60" stroke-width="1"/><path d="M4,6 L0.8,9.3" stroke="#405060" stroke-width="1.6"/></svg>
<div class="t s" style="left:555.9px;top:333.90px;font-size:7.08px;line-height:9.2px;color:#333;font-weight:normal;font-family:'Liberation Sans',sans-serif;transform:scaleY(1.120);">Zoom</div>
<div class="t s" style="left:580.3px;top:334px;width:0.8px;height:8.5px;background:#dde0e3"></div>
<svg style="left:584.5px;top:333.8px" width="11" height="9" viewBox="0 0 11 9"><rect x="2" y="0.5" width="8.5" height="7" fill="#f8e8a0" stroke="#a0a8b0" stroke-width="0.5"/><path d="M3,6.5 L5.5,4 L7,5.5 L8,4.5 L10,6.5 Z" fill="#4a9ad8"/><path d="M0,4.5 H4" stroke="#2aa05a" stroke-width="1.2"/></svg>
<div class="t s" style="left:596.3px;top:333.90px;font-size:7.08px;line-height:9.2px;color:#333;font-weight:normal;font-family:'Liberation Sans',sans-serif;transform:scaleY(1.120);">Export</div>
<svg style="left:620.80px;top:338.10px" width="4" height="3"><polygon points="0,0 3.2,0 1.6,2" fill="#333"/></svg>
<div class="t s" style="left:628.8px;top:334px;width:0.8px;height:8.5px;background:#dde0e3"></div>
<svg style="left:634.5px;top:333px" width="10" height="10.5" viewBox="0 0 10 10.5"><path d="M9.5,0.5 L5,5.5" stroke="#c0392b" stroke-width="1"/><path d="M1,9.8 Q1.5,6 4.5,5 L6,6.5 Q5,9.5 1,9.8 Z" fill="#e0a030"/></svg>
<div class="t s" style="left:647px;top:334px;width:0.8px;height:8.5px;background:#dde0e3"></div>
<svg style="left:651.8px;top:333.5px" width="10" height="9.5" viewBox="0 0 10 9.5"><rect x="3.5" y="0.5" width="6" height="6" fill="#fff" stroke="#c0c6cc" stroke-width="0.6"/><rect x="3.5" y="0.5" width="6" height="1.5" fill="#c0c6cc"/><path d="M0.5,9 L4,5.5" stroke="#b0b8c0" stroke-width="0.9"/></svg>
<div class="t s" style="left:666.3px;top:334px;width:0.8px;height:8.5px;background:#dde0e3"></div>
<svg style="left:672.8px;top:333.6px" width="8.6" height="8.6" viewBox="0 0 8.6 8.6"><circle cx="4.3" cy="4.3" r="4.1" fill="#dc3545"/><rect x="2" y="3.4" width="4.6" height="1.9" fill="#f0a0a8"/></svg>
<svg style="left:788px;top:334px" width="10.5" height="8.5" viewBox="0 0 10.5 8.5"><path d="M1,3.8 Q2.3,1.2 4.8,1.1 H7.2" stroke="#1f8ee0" stroke-width="1.5" stroke-linecap="round" fill="none"/><path d="M3.3,7.3 H5.7 Q8.2,7.2 9.5,4.6" stroke="#1f8ee0" stroke-width="1.5" stroke-linecap="round" fill="none"/><rect x="4.3" y="3.4" width="1.9" height="1.9" fill="#1f8ee0"/></svg>
<div class="t s" style="left:800.9px;top:333.03px;font-size:7.04px;line-height:9.15px;color:#333;font-weight:normal;font-family:'Liberation Sans',sans-serif;transform:scaleY(1.120);">Publish</div>
<svg style="left:830.40px;top:338.10px" width="4" height="3"><polygon points="0,0 3.2,0 1.6,2" fill="#333"/></svg>
<div class="t s" style="left:839.5px;top:334px;width:0.8px;height:8.5px;background:#dde0e3"></div>
<svg style="left:844px;top:333.3px" width="10" height="10" viewBox="0 0 10 10"><circle cx="5" cy="5" r="3.8" fill="none" stroke="#c4d4e8" stroke-width="1.2"/><path d="M5,2.5 V5 H7" stroke="#c4d4e8" stroke-width="0.9" fill="none"/></svg>
</div></body></html>
